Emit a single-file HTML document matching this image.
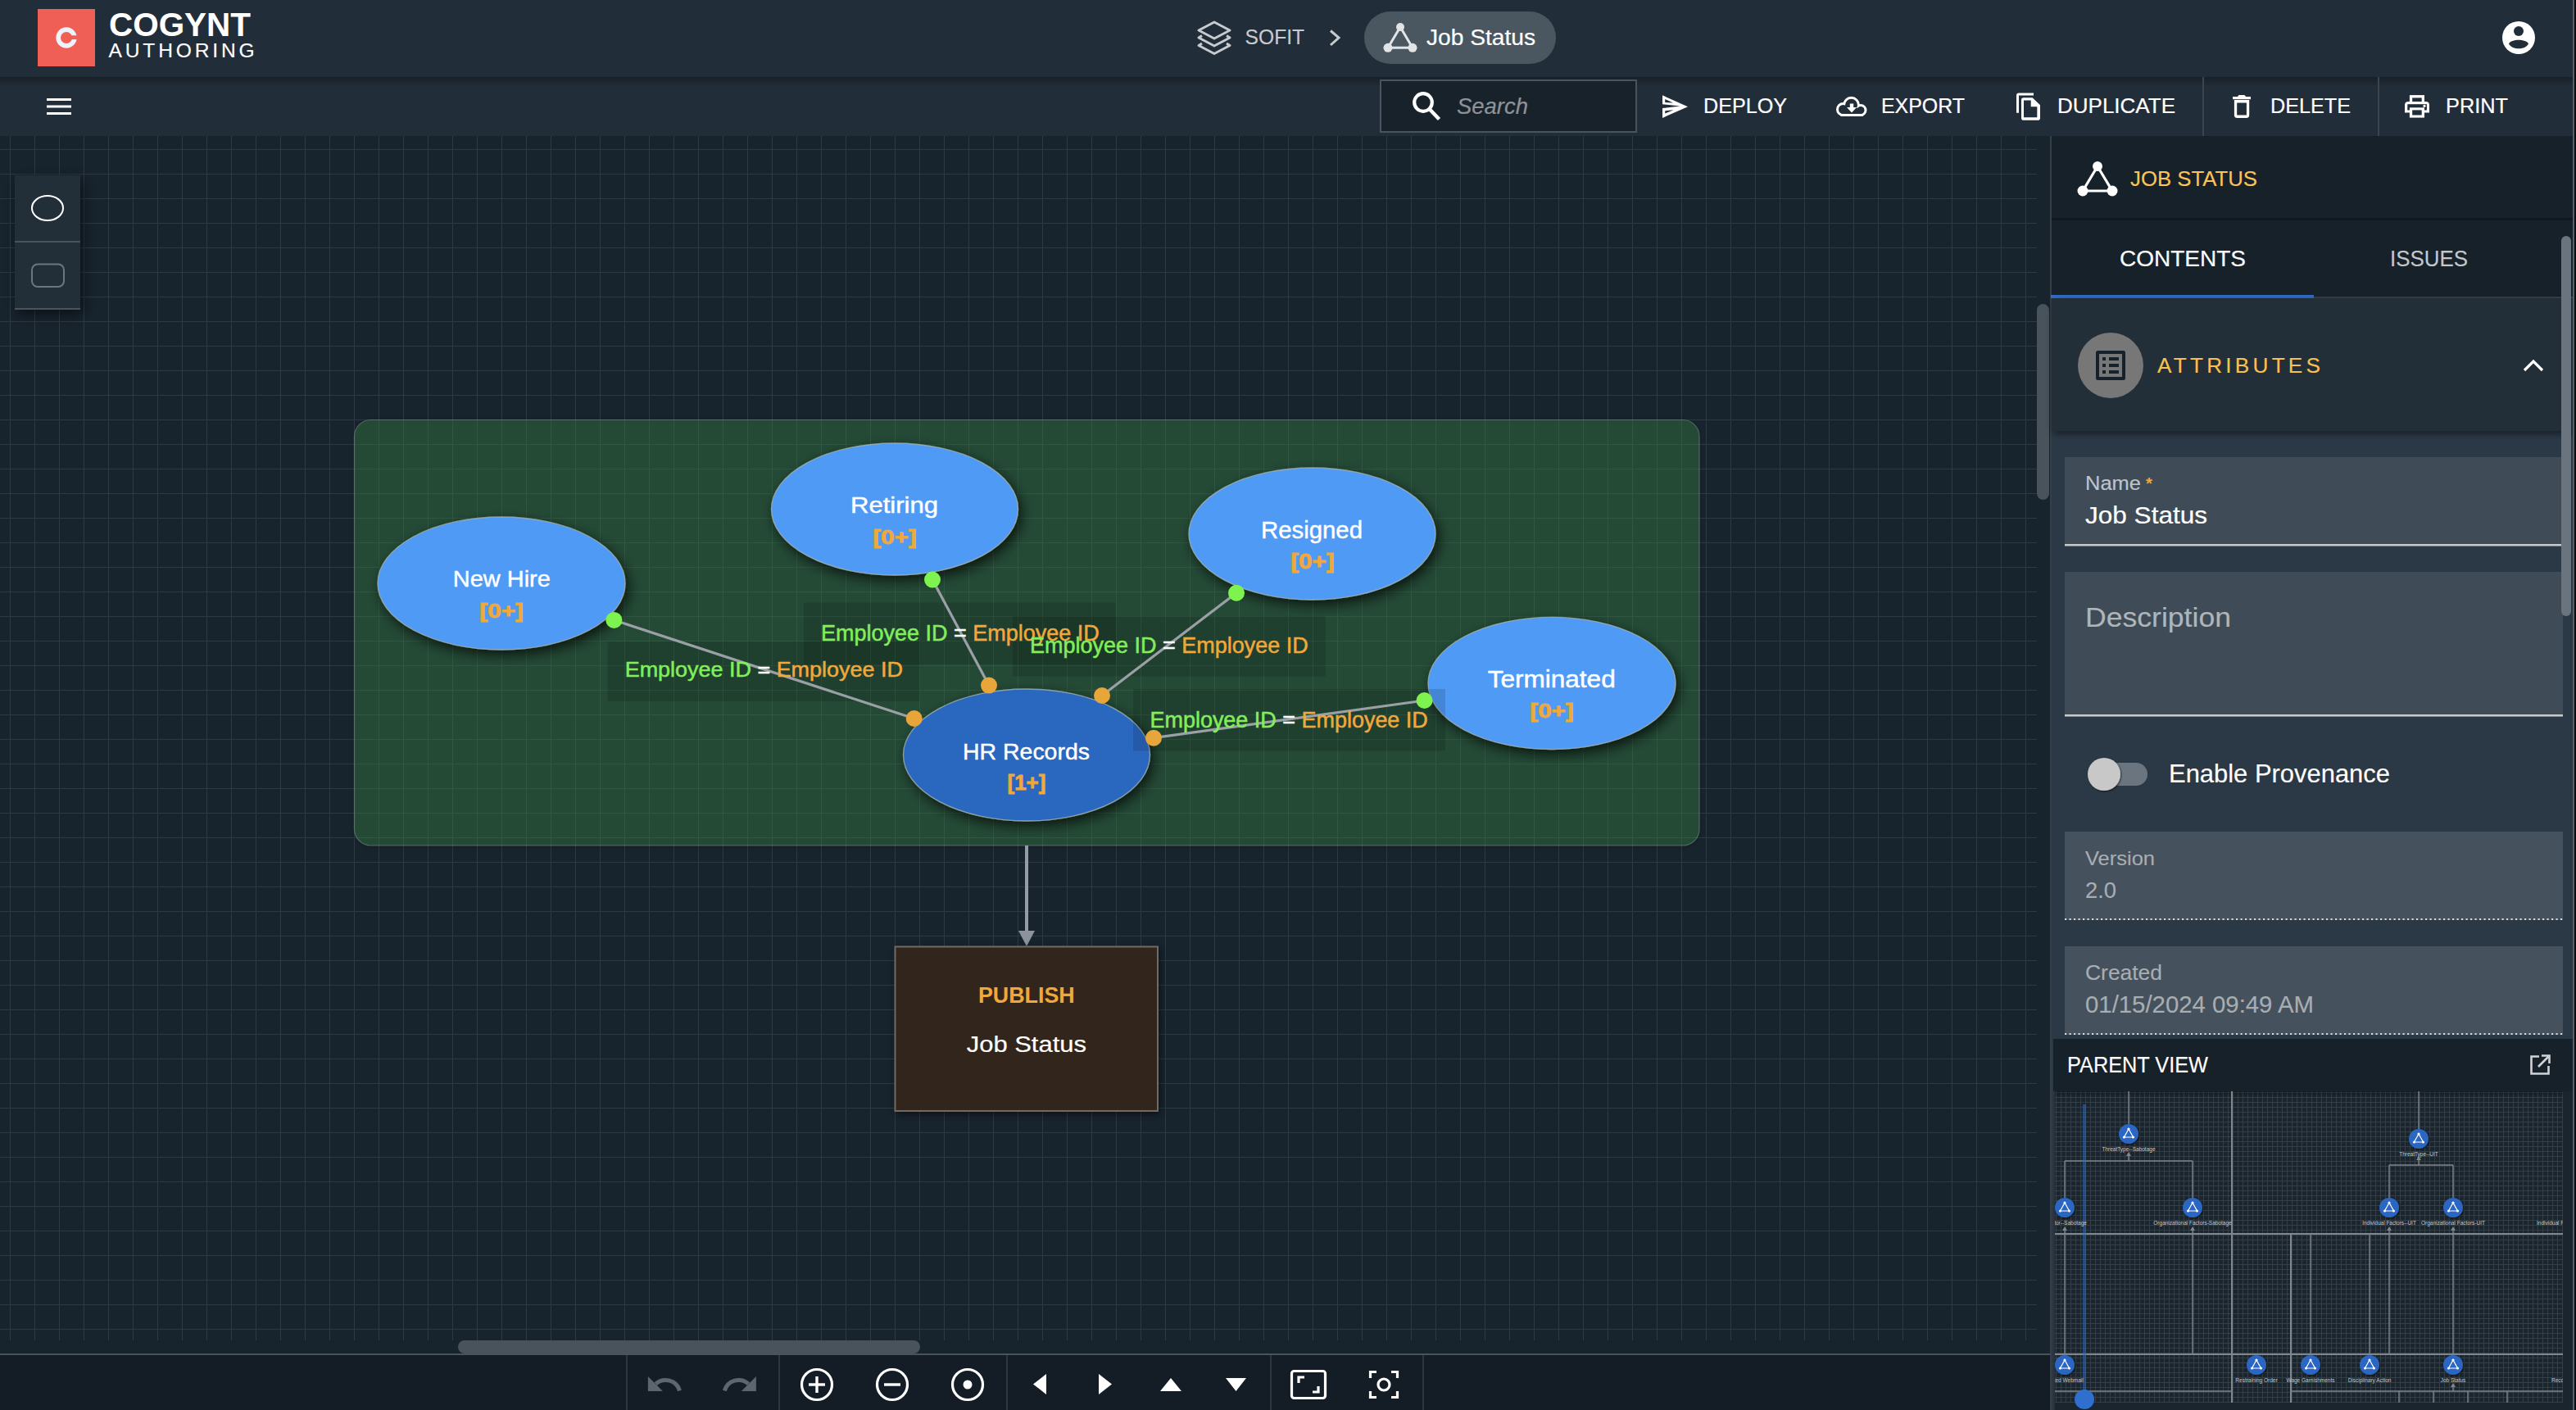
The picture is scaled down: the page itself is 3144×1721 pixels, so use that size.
<!DOCTYPE html><html><head><meta charset="utf-8"><title>Cogynt Authoring</title>
<style>html,body{margin:0;padding:0;background:#17232d;overflow:hidden}
svg{display:block;font-family:"Liberation Sans",sans-serif}</style></head><body>
<svg width="3144" height="1721" viewBox="0 0 3144 1721">
<defs>
<pattern id="grid" x="12" y="2" width="30" height="30" patternUnits="userSpaceOnUse">
<rect x="0" y="0" width="1" height="30" fill="#2d3943"/><rect x="0" y="0" width="30" height="1" fill="#2d3943"/>
</pattern>
<pattern id="mgrid" x="1" y="1" width="6" height="6" patternUnits="userSpaceOnUse">
<rect x="0" y="0" width="1" height="6" fill="#333e48"/><rect x="0" y="0" width="6" height="1" fill="#333e48"/>
</pattern>
<filter id="sh" x="-30%" y="-30%" width="160%" height="160%"><feDropShadow dx="4" dy="6" stdDeviation="8" flood-color="#000" flood-opacity="0.7"/></filter>
<filter id="sh2" x="-30%" y="-30%" width="160%" height="160%"><feDropShadow dx="2" dy="3" stdDeviation="5" flood-color="#000" flood-opacity="0.5"/></filter>
<filter id="sh3" x="-40%" y="-30%" width="180%" height="160%"><feDropShadow dx="3" dy="5" stdDeviation="8" flood-color="#000" flood-opacity="0.55"/></filter>
<filter id="shs" x="-30%" y="-30%" width="160%" height="160%"><feDropShadow dx="1" dy="1" stdDeviation="1.2" flood-color="#000" flood-opacity="0.6"/></filter>
<filter id="gsh" x="-5%" y="-5%" width="110%" height="110%"><feDropShadow dx="0" dy="1" stdDeviation="2" flood-color="#000" flood-opacity="0.5"/></filter>
<clipPath id="mclip"><rect x="2506" y="1332" width="622" height="389"/></clipPath>
<linearGradient id="hdrsh" x1="0" y1="0" x2="0" y2="1"><stop offset="0" stop-color="#000" stop-opacity="0.28"/><stop offset="1" stop-color="#000" stop-opacity="0"/></linearGradient>
</defs>

<rect x="0" y="0" width="3144" height="1721" fill="#17232d"/>
<rect x="0" y="166" width="2486" height="1470" fill="url(#grid)"/>
<rect x="432.5" y="512.5" width="1641.5" height="519.5" rx="20" fill="rgba(62,150,78,0.30)" stroke="rgba(150,175,160,0.38)" stroke-width="1.2" filter="url(#gsh)"/>
<rect x="1251" y="1032" width="4" height="106" fill="#969ca3"/>
<path d="M1243,1136 L1263,1136 L1253,1155 Z" fill="#8d939a"/>
<g filter="url(#sh2)"><rect x="1092.5" y="1155.5" width="320.5" height="200.5" fill="#33261a" stroke="#6f6b62" stroke-width="2"/></g>
<text x="1194.00" y="1224.00" font-size="27.62" font-weight="bold" font-style="normal" fill="#f0a83c" textLength="117.61" lengthAdjust="spacingAndGlyphs" >PUBLISH</text>
<text x="1179.70" y="1284.00" font-size="28.34" font-weight="normal" font-style="normal" fill="#ffffff" stroke="#ffffff" stroke-width="0.2" textLength="146.30" lengthAdjust="spacingAndGlyphs" >Job Status</text>
<ellipse cx="612" cy="712" rx="151" ry="81" fill="#4f9af5" stroke="rgba(170,180,175,0.75)" stroke-width="1.3" filter="url(#sh)"/>
<text x="552.80" y="716.10" font-size="27.91" font-weight="normal" font-style="normal" fill="#ffffff" stroke="#ffffff" stroke-width="0.45" textLength="119.00" lengthAdjust="spacingAndGlyphs" >New Hire</text>
<g transform="translate(585.30,753.99) scale(1.0580,0.8766)"><text x="0" y="0" font-size="28" font-weight="bold" fill="#f0a83c" stroke="#f0a83c" stroke-width="0.9">[0+]</text></g>
<ellipse cx="1092" cy="621.5" rx="150.5" ry="80.5" fill="#4f9af5" stroke="rgba(170,180,175,0.75)" stroke-width="1.3" filter="url(#sh)"/>
<text x="1038.00" y="626.00" font-size="27.62" font-weight="normal" font-style="normal" fill="#ffffff" stroke="#ffffff" stroke-width="0.45" textLength="106.99" lengthAdjust="spacingAndGlyphs" >Retiring</text>
<g transform="translate(1065.20,664.07) scale(1.0580,0.8804)"><text x="0" y="0" font-size="28" font-weight="bold" fill="#f0a83c" stroke="#f0a83c" stroke-width="0.9">[0+]</text></g>
<ellipse cx="1601.5" cy="651.5" rx="150.5" ry="80.5" fill="#4f9af5" stroke="rgba(170,180,175,0.75)" stroke-width="1.3" filter="url(#sh)"/>
<text x="1539.00" y="657.00" font-size="29.65" font-weight="normal" font-style="normal" fill="#ffffff" stroke="#ffffff" stroke-width="0.45" textLength="124.00" lengthAdjust="spacingAndGlyphs" >Resigned</text>
<g transform="translate(1575.20,694.03) scale(1.0560,0.8881)"><text x="0" y="0" font-size="28" font-weight="bold" fill="#f0a83c" stroke="#f0a83c" stroke-width="0.9">[0+]</text></g>
<ellipse cx="1894" cy="834" rx="151" ry="80.6" fill="#4f9af5" stroke="rgba(170,180,175,0.75)" stroke-width="1.3" filter="url(#sh)"/>
<text x="1815.70" y="838.50" font-size="28.78" font-weight="normal" font-style="normal" fill="#ffffff" stroke="#ffffff" stroke-width="0.45" textLength="155.99" lengthAdjust="spacingAndGlyphs" >Terminated</text>
<g transform="translate(1867.30,875.97) scale(1.0560,0.8804)"><text x="0" y="0" font-size="28" font-weight="bold" fill="#f0a83c" stroke="#f0a83c" stroke-width="0.9">[0+]</text></g>
<ellipse cx="1253" cy="921.5" rx="150.5" ry="80.5" fill="#2968c0" stroke="rgba(170,180,175,0.75)" stroke-width="1.3" filter="url(#sh)"/>
<text x="1175.00" y="926.50" font-size="28.34" font-weight="normal" font-style="normal" fill="#ffffff" stroke="#ffffff" stroke-width="0.45" textLength="155.00" lengthAdjust="spacingAndGlyphs" >HR Records</text>
<g transform="translate(1229.60,964.03) scale(0.9235,0.8881)"><text x="0" y="0" font-size="28" font-weight="bold" fill="#f0a83c" stroke="#f0a83c" stroke-width="0.9">[1+]</text></g>
<rect x="741.6" y="783" width="381" height="73" fill="rgba(0,0,0,0.13)"/>
<rect x="981" y="735.5" width="381" height="75.5" fill="rgba(0,0,0,0.13)"/>
<rect x="1236" y="752" width="381.7" height="73.5" fill="rgba(0,0,0,0.13)"/>
<rect x="1383" y="841" width="381" height="75.5" fill="rgba(0,0,0,0.13)"/>
<line x1="749.4" y1="756.9" x2="1115.7" y2="877" stroke="#9aa0a6" stroke-width="3.2"/>
<line x1="1138" y1="707.5" x2="1207" y2="836.6" stroke="#9aa0a6" stroke-width="3.2"/>
<line x1="1509" y1="723.7" x2="1345" y2="849" stroke="#9aa0a6" stroke-width="3.2"/>
<line x1="1738.5" y1="855" x2="1408" y2="900.7" stroke="#9aa0a6" stroke-width="3.2"/>
<g transform="translate(762.70,826.00) scale(1.0302,1)"><text x="0" y="0" font-size="26.16" font-weight="normal" xml:space="preserve" ><tspan fill="#82ee5a" stroke="#82ee5a" stroke-width="0.5">Employee ID</tspan><tspan fill="#ffffff" stroke="#ffffff" stroke-width="0.5"> = </tspan><tspan fill="#f0a83c" stroke="#f0a83c" stroke-width="0.5">Employee ID</tspan></text></g>
<g transform="translate(1002.00,782.00) scale(0.9990,1)"><text x="0" y="0" font-size="27.03" font-weight="normal" xml:space="preserve" ><tspan fill="#82ee5a" stroke="#82ee5a" stroke-width="0.5">Employee ID</tspan><tspan fill="#ffffff" stroke="#ffffff" stroke-width="0.5"> = </tspan><tspan fill="#f0a83c" stroke="#f0a83c" stroke-width="0.5">Employee ID</tspan></text></g>
<g transform="translate(1257.00,797.00) scale(0.9771,1)"><text x="0" y="0" font-size="27.62" font-weight="normal" xml:space="preserve" ><tspan fill="#82ee5a" stroke="#82ee5a" stroke-width="0.5">Employee ID</tspan><tspan fill="#ffffff" stroke="#ffffff" stroke-width="0.5"> = </tspan><tspan fill="#f0a83c" stroke="#f0a83c" stroke-width="0.5">Employee ID</tspan></text></g>
<g transform="translate(1403.50,888.00) scale(0.9975,1)"><text x="0" y="0" font-size="27.03" font-weight="normal" xml:space="preserve" ><tspan fill="#82ee5a" stroke="#82ee5a" stroke-width="0.5">Employee ID</tspan><tspan fill="#ffffff" stroke="#ffffff" stroke-width="0.5"> = </tspan><tspan fill="#f0a83c" stroke="#f0a83c" stroke-width="0.5">Employee ID</tspan></text></g>
<circle cx="749.4" cy="756.9" r="10" fill="#7ef24e"/>
<circle cx="1115.7" cy="877" r="10" fill="#e8a53a"/>
<circle cx="1138" cy="707.5" r="10" fill="#7ef24e"/>
<circle cx="1207" cy="836.6" r="10" fill="#e8a53a"/>
<circle cx="1509" cy="723.7" r="10" fill="#7ef24e"/>
<circle cx="1345" cy="849" r="10" fill="#e8a53a"/>
<circle cx="1738.5" cy="855" r="10" fill="#7ef24e"/>
<circle cx="1408" cy="900.7" r="10" fill="#e8a53a"/>
<g filter="url(#sh3)"><rect x="18" y="214" width="80" height="164" fill="#212d38"/></g>
<rect x="18" y="294" width="80" height="2" fill="#48535c"/>
<rect x="18" y="376" width="80" height="2" fill="#4a545c"/>
<ellipse cx="58" cy="254" rx="19" ry="15" fill="none" stroke="#ffffff" stroke-width="2"/>
<rect x="39" y="322.5" width="39" height="27.5" rx="7" fill="none" stroke="#6c7580" stroke-width="2"/>
<rect x="2486" y="371" width="15" height="239" rx="7.5" fill="#48535c"/>
<rect x="559" y="1636" width="564" height="16" rx="8" fill="#48535c"/>
<rect x="0" y="0" width="3144" height="94" fill="#212d39"/>
<rect x="0" y="94" width="3144" height="72" fill="#212d39"/>
<rect x="0" y="94" width="3144" height="12" fill="url(#hdrsh)"/>
<rect x="46" y="11" width="70" height="70" fill="#ef5f55"/>
<circle cx="81" cy="46" r="9.83" fill="none" stroke="#eef2f9" stroke-width="5.65"/><rect x="81" y="43.3" width="14" height="4.8" fill="#ef5f55"/>
<text x="133.00" y="43.70" font-size="41.13" font-weight="bold" font-style="normal" fill="#ffffff" textLength="172.99" lengthAdjust="spacingAndGlyphs" >COGYNT</text>
<text x="132.50" y="69.90" font-size="24.56" font-weight="normal" font-style="normal" fill="#ffffff" stroke="#ffffff" stroke-width="0.15" textLength="178.20" lengthAdjust="spacing" >AUTHORING</text>
<g fill="none" stroke="#c8cbce" stroke-width="3" stroke-linejoin="round"><path d="M1482,27 L1501,37 L1482,47 L1463,37 Z"/><path d="M1467,43.5 L1463,46 L1482,56 L1501,46 L1497,43.5"/><path d="M1467,53 L1463,55.5 L1482,65.5 L1501,55.5 L1497,53"/></g>
<text x="1519.60" y="54.20" font-size="25.58" font-weight="normal" font-style="normal" fill="#c8cbce" stroke="#c8cbce" stroke-width="0.15" textLength="72.41" lengthAdjust="spacingAndGlyphs" >SOFIT</text>
<path d="M1624,37.5 L1634,46 L1624,55" fill="none" stroke="#c8cbce" stroke-width="3"/>
<rect x="1665" y="14" width="234" height="64" rx="32" fill="#4a5761"/>
<g stroke="#e2e4e6" stroke-width="3" fill="#e2e4e6"><path d="M1709,33 L1694,58.3 L1724,58.3 Z" fill="none"/><circle cx="1709" cy="33" r="5" stroke="none"/><circle cx="1694" cy="58.3" r="5.5" stroke="none"/><circle cx="1724" cy="58.3" r="5.5" stroke="none"/></g>
<text x="1741.00" y="55.00" font-size="27.62" font-weight="normal" font-style="normal" fill="#ffffff" stroke="#ffffff" stroke-width="0.2" textLength="133.00" lengthAdjust="spacingAndGlyphs" >Job Status</text>
<circle cx="3074" cy="46" r="20" fill="#ffffff"/><circle cx="3074" cy="37.9" r="6" fill="#212d39"/><path d="M3062,53.5 C3065,47.3 3083,47.3 3086,53.5 C3082,61.3 3066,61.3 3062,53.5 Z" fill="#212d39"/>
<g fill="#ffffff"><rect x="57" y="120" width="30" height="3"/><rect x="57" y="128.5" width="30" height="3"/><rect x="57" y="137" width="30" height="3"/></g>
<rect x="1685" y="98" width="312" height="63" fill="#18222b" stroke="#4a545c" stroke-width="2"/>
<circle cx="1737" cy="125" r="10.8" fill="none" stroke="#ffffff" stroke-width="4.2"/><path d="M1745,133.5 L1756.5,145.5" stroke="#ffffff" stroke-width="4.5"/>
<text x="1778.00" y="139.00" font-size="26.89" font-weight="normal" font-style="italic" fill="#8e9399" stroke="#8e9399" stroke-width="0.2" textLength="87.01" lengthAdjust="spacingAndGlyphs" >Search</text>
<path fill-rule="evenodd" fill="#ffffff" d="M2029,116.3 L2060,130.2 L2029,143.9 Z M2029,127.2 L2050.6,129.6 L2029,132 Z M2032.2,121.1 L2042,125.5 L2032.2,125 Z M2032.2,135.2 L2042.5,134.2 L2032.2,138.6 Z"/>
<g stroke="#ffffff" stroke-width="6" fill="#ffffff"><circle cx="2249.5" cy="133.5" r="5.5"/><circle cx="2259.5" cy="128.3" r="7.5"/><circle cx="2271" cy="134.5" r="4.5"/><rect x="2249.5" y="132" width="21.5" height="7"/></g>
<g fill="#212d39"><circle cx="2249.5" cy="133.5" r="5.5"/><circle cx="2259.5" cy="128.3" r="7.5"/><circle cx="2271" cy="134.5" r="4.5"/><rect x="2249.5" y="132" width="21.5" height="7"/></g>
<g fill="#ffffff"><rect x="2257.8" y="126.5" width="4.4" height="5"/><path d="M2254,131 L2266,131 L2260,137.4 Z"/></g>
<path d="M2462.5,137.8 L2462.5,116.5 Q2462.5,115 2464,115 L2482,115" fill="none" stroke="#ffffff" stroke-width="3"/>
<path fill="#ffffff" d="M2467,122 Q2467,119.2 2469.8,119.2 L2480.6,119.2 L2490,128.3 L2490,143.9 Q2490,146.7 2487.2,146.7 L2469.8,146.7 Q2467,146.7 2467,143.9 Z"/><path fill="#212d39" d="M2470,122.6 L2478.7,122.6 L2478.7,130.2 L2486.3,130.2 L2486.3,143.3 L2470,143.3 Z"/>
<g fill="#ffffff"><rect x="2725" y="118" width="22" height="3.2"/><path d="M2730.8,118.2 L2732.5,116 L2739.5,116 L2741.3,118.2 Z"/><path d="M2726.9,122 L2745.2,122 L2745.2,140.5 Q2745.2,143.9 2741.8,143.9 L2730.3,143.9 Q2726.9,143.9 2726.9,140.5 Z"/></g><rect x="2730.2" y="125.5" width="11.7" height="15" fill="#212d39"/>
<rect x="2940.9" y="116.1" width="18.1" height="8.5" fill="#ffffff"/><rect x="2944.2" y="119.4" width="11.5" height="4.7" fill="#212d39"/><path fill="#ffffff" d="M2935,128.5 Q2935,124.1 2939.4,124.1 L2960.6,124.1 Q2965,124.1 2965,128.5 L2965,137.6 L2935,137.6 Z"/><rect x="2938.3" y="127.2" width="23.6" height="7.3" fill="#212d39"/><rect x="2940.9" y="131.3" width="18.1" height="12.3" fill="#ffffff"/><rect x="2944.2" y="134.4" width="11.5" height="6.1" fill="#212d39"/><circle cx="2959" cy="129.3" r="1.6" fill="#ffffff"/>
<text x="2079.00" y="138.30" font-size="25.15" font-weight="normal" font-style="normal" fill="#ffffff" stroke="#ffffff" stroke-width="0.2" textLength="102.00" lengthAdjust="spacingAndGlyphs" >DEPLOY</text>
<text x="2296.00" y="138.30" font-size="25.15" font-weight="normal" font-style="normal" fill="#ffffff" stroke="#ffffff" stroke-width="0.2" textLength="101.99" lengthAdjust="spacingAndGlyphs" >EXPORT</text>
<text x="2511.00" y="138.30" font-size="25.15" font-weight="normal" font-style="normal" fill="#ffffff" stroke="#ffffff" stroke-width="0.2" textLength="144.00" lengthAdjust="spacingAndGlyphs" >DUPLICATE</text>
<text x="2771.00" y="138.30" font-size="25.15" font-weight="normal" font-style="normal" fill="#ffffff" stroke="#ffffff" stroke-width="0.2" textLength="98.00" lengthAdjust="spacingAndGlyphs" >DELETE</text>
<text x="2985.00" y="138.30" font-size="25.15" font-weight="normal" font-style="normal" fill="#ffffff" stroke="#ffffff" stroke-width="0.2" textLength="76.00" lengthAdjust="spacingAndGlyphs" >PRINT</text>
<rect x="2688" y="94" width="2" height="72" fill="#3a4550"/><rect x="2902" y="94" width="2" height="72" fill="#3a4550"/>
<rect x="2502" y="166" width="638" height="1555" fill="#2b3846"/>
<rect x="2502" y="166" width="638" height="198" fill="#17212a"/>
<rect x="2504" y="266" width="636" height="3" fill="rgba(0,0,0,0.25)"/>
<rect x="2502" y="166" width="2" height="1555" fill="#363f48"/>
<g stroke="#ffffff" stroke-width="3.2" fill="none"><path d="M2560,203 L2542,233 L2578,233 Z"/></g><g fill="#ffffff"><circle cx="2560" cy="203" r="6"/><circle cx="2542" cy="233" r="6.5"/><circle cx="2578" cy="233" r="6.5"/></g>
<text x="2600.00" y="227.00" font-size="26.16" font-weight="normal" font-style="normal" fill="#fac456" stroke="#fac456" stroke-width="0.15" textLength="155.00" lengthAdjust="spacingAndGlyphs" >JOB STATUS</text>
<text x="2587.00" y="325.00" font-size="27.62" font-weight="normal" font-style="normal" fill="#ffffff" stroke="#ffffff" stroke-width="0.2" textLength="154.00" lengthAdjust="spacingAndGlyphs" >CONTENTS</text>
<text x="2917.00" y="325.00" font-size="27.62" font-weight="normal" font-style="normal" fill="#c4c8cc" stroke="#c4c8cc" stroke-width="0.15" textLength="95.00" lengthAdjust="spacingAndGlyphs" >ISSUES</text>
<rect x="2504" y="362" width="636" height="2" fill="#38434d"/>
<rect x="2503" y="360" width="321" height="4" fill="#2f6fce"/>
<g filter="url(#sh2)"><rect x="2504" y="364" width="636" height="162" fill="#212d39"/></g>
<circle cx="2576" cy="446" r="40" fill="#777777"/>
<rect x="2558" y="428" width="36" height="36" rx="2.5" fill="#16212b"/><rect x="2562" y="432" width="28" height="28" fill="#777777"/><g fill="#16212b"><rect x="2566" y="436" width="4" height="4"/><rect x="2574" y="436" width="12" height="4"/><rect x="2566" y="444" width="4" height="4"/><rect x="2574" y="444" width="12" height="4"/><rect x="2566" y="452" width="4" height="4"/><rect x="2574" y="452" width="12" height="4"/></g>
<text x="2633.00" y="455.00" font-size="26.16" font-weight="normal" font-style="normal" fill="#f7c050" stroke="#f7c050" stroke-width="0.15" textLength="199.01" lengthAdjust="spacing" >ATTRIBUTES</text>
<path d="M3081,452 L3092,441 L3103,452" fill="none" stroke="#ffffff" stroke-width="3.2"/>
<rect x="2520" y="558" width="608" height="108" fill="#3f4c58"/><rect x="2520" y="664" width="608" height="2.5" fill="#c8cacc"/>
<text x="2545.00" y="598.00" font-size="23.26" font-weight="normal" font-style="normal" fill="#c0c4c8" stroke="#c0c4c8" stroke-width="0.15" textLength="67.99" lengthAdjust="spacingAndGlyphs" >Name</text>
<text x="2619" y="597" font-size="20" fill="#f0a83c" font-weight="bold">*</text>
<text x="2545.00" y="639.00" font-size="29.07" font-weight="normal" font-style="normal" fill="#ffffff" stroke="#ffffff" stroke-width="0.2" textLength="149.00" lengthAdjust="spacingAndGlyphs" >Job Status</text>
<rect x="2520" y="698" width="608" height="177" fill="#3f4c58"/><rect x="2520" y="872" width="608" height="2.5" fill="#c8cacc"/>
<text x="2545.00" y="764.50" font-size="32.70" font-weight="normal" font-style="normal" fill="#b0b5ba" stroke="#b0b5ba" stroke-width="0.15" textLength="178.00" lengthAdjust="spacingAndGlyphs" >Description</text>
<rect x="2550" y="931" width="71" height="28" rx="14" fill="#6b7580"/>
<circle cx="2568" cy="945" r="20" fill="#c8c8c8" filter="url(#shs)"/>
<text x="2647.00" y="955.00" font-size="30.52" font-weight="normal" font-style="normal" fill="#ffffff" stroke="#ffffff" stroke-width="0.15" textLength="269.99" lengthAdjust="spacingAndGlyphs" >Enable Provenance</text>
<rect x="2520" y="1015" width="608" height="108" fill="#45515d"/>
<line x1="2520" y1="1122" x2="3128" y2="1122" stroke="#d8dadc" stroke-width="2.2" stroke-dasharray="2.2,3.3"/>
<text x="2545.00" y="1056.00" font-size="24.71" font-weight="normal" font-style="normal" fill="#a8adb2" stroke="#a8adb2" stroke-width="0.15" textLength="85.01" lengthAdjust="spacingAndGlyphs" >Version</text>
<text x="2545.00" y="1096.00" font-size="28.34" font-weight="normal" font-style="normal" fill="#a8adb2" stroke="#a8adb2" stroke-width="0.15" textLength="38.00" lengthAdjust="spacingAndGlyphs" >2.0</text>
<rect x="2520" y="1155" width="608" height="108" fill="#45515d"/>
<line x1="2520" y1="1262" x2="3128" y2="1262" stroke="#d8dadc" stroke-width="2.2" stroke-dasharray="2.2,3.3"/>
<text x="2545.00" y="1195.60" font-size="25.58" font-weight="normal" font-style="normal" fill="#a8adb2" stroke="#a8adb2" stroke-width="0.15" textLength="93.99" lengthAdjust="spacingAndGlyphs" >Created</text>
<text x="2545.00" y="1236.00" font-size="29.07" font-weight="normal" font-style="normal" fill="#a8adb2" stroke="#a8adb2" stroke-width="0.15" textLength="279.00" lengthAdjust="spacingAndGlyphs" >01/15/2024 09:49 AM</text>
<rect x="3126" y="288" width="12" height="464" rx="6" fill="#6a747e"/>
<rect x="2506" y="1268" width="634" height="64" fill="#17212a"/>
<text x="2523.00" y="1309.00" font-size="27.62" font-weight="normal" font-style="normal" fill="#ffffff" stroke="#ffffff" stroke-width="0.15" textLength="172.01" lengthAdjust="spacingAndGlyphs" >PARENT VIEW</text>
<g fill="none" stroke="#d0d3d6" stroke-width="2.6"><path d="M3099,1289.5 L3089.5,1289.5 L3089.5,1310.5 L3110.5,1310.5 L3110.5,1301"/><path d="M3098,1302 L3111,1289"/><path d="M3102,1288.5 L3111.5,1288.5 L3111.5,1298"/></g>
<rect x="3140" y="0" width="2" height="1721" fill="#56606a"/><rect x="3142" y="0" width="2" height="1721" fill="#0a0d10"/>
<rect x="2506" y="1332" width="634" height="389" fill="#1b252e"/>
<g clip-path="url(#mclip)">
<rect x="2506" y="1332" width="622" height="380" fill="url(#mgrid)"/>
<rect x="2506" y="1332" width="634" height="6" fill="url(#hdrsh)"/>
<line x1="2598" y1="1332" x2="2598" y2="1372" stroke="#80868c" stroke-width="1.4"/>
<line x1="2952" y1="1332" x2="2952" y2="1378" stroke="#80868c" stroke-width="1.4"/>
<line x1="2520" y1="1417" x2="2676" y2="1417" stroke="#80868c" stroke-width="1.4"/>
<line x1="2520" y1="1417" x2="2520" y2="1462" stroke="#80868c" stroke-width="1.4"/>
<line x1="2676" y1="1417" x2="2676" y2="1462" stroke="#80868c" stroke-width="1.4"/>
<line x1="2598" y1="1408" x2="2598" y2="1417" stroke="#80868c" stroke-width="1.4"/>
<path d="M2595,1411 L2601,1411 L2598,1406 Z" fill="#80868c"/>
<line x1="2916" y1="1422" x2="2994" y2="1422" stroke="#80868c" stroke-width="1.4"/>
<line x1="2916" y1="1422" x2="2916" y2="1462" stroke="#80868c" stroke-width="1.4"/>
<line x1="2994" y1="1422" x2="2994" y2="1462" stroke="#80868c" stroke-width="1.4"/>
<line x1="2952" y1="1413" x2="2952" y2="1422" stroke="#80868c" stroke-width="1.4"/>
<path d="M2949,1416 L2955,1416 L2952,1411 Z" fill="#80868c"/>
<line x1="2724" y1="1332" x2="2724" y2="1712" stroke="#80868c" stroke-width="2"/>
<line x1="2506" y1="1506" x2="3128" y2="1506" stroke="#80868c" stroke-width="2"/>
<line x1="2506" y1="1653" x2="3128" y2="1653" stroke="#80868c" stroke-width="2"/>
<line x1="2520" y1="1500" x2="2520" y2="1653" stroke="#80868c" stroke-width="1.4"/>
<path d="M2517,1502 L2523,1502 L2520,1497 Z" fill="#80868c"/>
<line x1="2676" y1="1500" x2="2676" y2="1653" stroke="#80868c" stroke-width="1.4"/>
<path d="M2673,1502 L2679,1502 L2676,1497 Z" fill="#80868c"/>
<line x1="2916" y1="1500" x2="2916" y2="1653" stroke="#80868c" stroke-width="1.4"/>
<path d="M2913,1502 L2919,1502 L2916,1497 Z" fill="#80868c"/>
<line x1="2994" y1="1500" x2="2994" y2="1653" stroke="#80868c" stroke-width="1.4"/>
<path d="M2991,1502 L2997,1502 L2994,1497 Z" fill="#80868c"/>
<line x1="2796" y1="1506" x2="2796" y2="1712" stroke="#80868c" stroke-width="2"/>
<line x1="2820" y1="1506" x2="2820" y2="1654" stroke="#80868c" stroke-width="1.4"/>
<line x1="2892" y1="1506" x2="2892" y2="1654" stroke="#80868c" stroke-width="1.4"/>
<line x1="2506" y1="1698" x2="2724" y2="1698" stroke="#80868c" stroke-width="1.4"/>
<line x1="2796" y1="1698" x2="3128" y2="1698" stroke="#80868c" stroke-width="1.4"/>
<line x1="2928" y1="1698" x2="2928" y2="1712" stroke="#80868c" stroke-width="1.4"/>
<line x1="2970" y1="1698" x2="2970" y2="1712" stroke="#80868c" stroke-width="1.4"/>
<line x1="3012" y1="1698" x2="3012" y2="1712" stroke="#80868c" stroke-width="1.4"/>
<line x1="3060" y1="1698" x2="3060" y2="1712" stroke="#80868c" stroke-width="1.4"/>
<line x1="2994" y1="1690" x2="2994" y2="1698" stroke="#80868c" stroke-width="1.4"/>
<path d="M2991,1693 L2997,1693 L2994,1688 Z" fill="#80868c"/>
<rect x="2542" y="1348" width="4" height="360" fill="rgba(45,105,200,0.55)"/>
<circle cx="2598" cy="1384" r="12" fill="#2966c2" filter="url(#shs)"/>
<g stroke="#ffffff" stroke-width="1.2" fill="none"><path d="M2598,1378 L2592.5,1388 L2603.5,1388 Z"/></g><g fill="#ffffff"><circle cx="2598" cy="1378" r="1.6"/><circle cx="2592.5" cy="1388" r="1.6"/><circle cx="2603.5" cy="1388" r="1.6"/></g>
<text x="2598" y="1405" font-size="6.5" fill="#c4c8cc" text-anchor="middle">ThreatType--Sabotage</text>
<circle cx="2952" cy="1390" r="12" fill="#2966c2" filter="url(#shs)"/>
<g stroke="#ffffff" stroke-width="1.2" fill="none"><path d="M2952,1384 L2946.5,1394 L2957.5,1394 Z"/></g><g fill="#ffffff"><circle cx="2952" cy="1384" r="1.6"/><circle cx="2946.5" cy="1394" r="1.6"/><circle cx="2957.5" cy="1394" r="1.6"/></g>
<text x="2952" y="1411" font-size="6.5" fill="#c4c8cc" text-anchor="middle">ThreatType--UIT</text>
<circle cx="2520" cy="1474" r="12" fill="#2966c2" filter="url(#shs)"/>
<g stroke="#ffffff" stroke-width="1.2" fill="none"><path d="M2520,1468 L2514.5,1478 L2525.5,1478 Z"/></g><g fill="#ffffff"><circle cx="2520" cy="1468" r="1.6"/><circle cx="2514.5" cy="1478" r="1.6"/><circle cx="2525.5" cy="1478" r="1.6"/></g>
<text x="2520" y="1495" font-size="6.5" fill="#c4c8cc" text-anchor="middle">l Factor--Sabotage</text>
<circle cx="2676" cy="1474" r="12" fill="#2966c2" filter="url(#shs)"/>
<g stroke="#ffffff" stroke-width="1.2" fill="none"><path d="M2676,1468 L2670.5,1478 L2681.5,1478 Z"/></g><g fill="#ffffff"><circle cx="2676" cy="1468" r="1.6"/><circle cx="2670.5" cy="1478" r="1.6"/><circle cx="2681.5" cy="1478" r="1.6"/></g>
<text x="2676" y="1495" font-size="6.5" fill="#c4c8cc" text-anchor="middle">Organizational Factors-Sabotage</text>
<circle cx="2916" cy="1474" r="12" fill="#2966c2" filter="url(#shs)"/>
<g stroke="#ffffff" stroke-width="1.2" fill="none"><path d="M2916,1468 L2910.5,1478 L2921.5,1478 Z"/></g><g fill="#ffffff"><circle cx="2916" cy="1468" r="1.6"/><circle cx="2910.5" cy="1478" r="1.6"/><circle cx="2921.5" cy="1478" r="1.6"/></g>
<text x="2916" y="1495" font-size="6.5" fill="#c4c8cc" text-anchor="middle">Individual Factors--UIT</text>
<circle cx="2994" cy="1474" r="12" fill="#2966c2" filter="url(#shs)"/>
<g stroke="#ffffff" stroke-width="1.2" fill="none"><path d="M2994,1468 L2988.5,1478 L2999.5,1478 Z"/></g><g fill="#ffffff"><circle cx="2994" cy="1468" r="1.6"/><circle cx="2988.5" cy="1478" r="1.6"/><circle cx="2999.5" cy="1478" r="1.6"/></g>
<text x="2994" y="1495" font-size="6.5" fill="#c4c8cc" text-anchor="middle">Organizational Factors-UIT</text>
<circle cx="2520" cy="1666" r="12" fill="#2966c2" filter="url(#shs)"/>
<g stroke="#ffffff" stroke-width="1.2" fill="none"><path d="M2520,1660 L2514.5,1670 L2525.5,1670 Z"/></g><g fill="#ffffff"><circle cx="2520" cy="1660" r="1.6"/><circle cx="2514.5" cy="1670" r="1.6"/><circle cx="2525.5" cy="1670" r="1.6"/></g>
<text x="2520" y="1687" font-size="6.5" fill="#c4c8cc" text-anchor="middle">clisted Webmail</text>
<circle cx="2754" cy="1666" r="12" fill="#2966c2" filter="url(#shs)"/>
<g stroke="#ffffff" stroke-width="1.2" fill="none"><path d="M2754,1660 L2748.5,1670 L2759.5,1670 Z"/></g><g fill="#ffffff"><circle cx="2754" cy="1660" r="1.6"/><circle cx="2748.5" cy="1670" r="1.6"/><circle cx="2759.5" cy="1670" r="1.6"/></g>
<text x="2754" y="1687" font-size="6.5" fill="#c4c8cc" text-anchor="middle">Restraining Order</text>
<circle cx="2820" cy="1666" r="12" fill="#2966c2" filter="url(#shs)"/>
<g stroke="#ffffff" stroke-width="1.2" fill="none"><path d="M2820,1660 L2814.5,1670 L2825.5,1670 Z"/></g><g fill="#ffffff"><circle cx="2820" cy="1660" r="1.6"/><circle cx="2814.5" cy="1670" r="1.6"/><circle cx="2825.5" cy="1670" r="1.6"/></g>
<text x="2820" y="1687" font-size="6.5" fill="#c4c8cc" text-anchor="middle">Wage Garnishments</text>
<circle cx="2892" cy="1666" r="12" fill="#2966c2" filter="url(#shs)"/>
<g stroke="#ffffff" stroke-width="1.2" fill="none"><path d="M2892,1660 L2886.5,1670 L2897.5,1670 Z"/></g><g fill="#ffffff"><circle cx="2892" cy="1660" r="1.6"/><circle cx="2886.5" cy="1670" r="1.6"/><circle cx="2897.5" cy="1670" r="1.6"/></g>
<text x="2892" y="1687" font-size="6.5" fill="#c4c8cc" text-anchor="middle">Disciplinary Action</text>
<circle cx="2994" cy="1666" r="12" fill="#2966c2" filter="url(#shs)"/>
<g stroke="#ffffff" stroke-width="1.2" fill="none"><path d="M2994,1660 L2988.5,1670 L2999.5,1670 Z"/></g><g fill="#ffffff"><circle cx="2994" cy="1660" r="1.6"/><circle cx="2988.5" cy="1670" r="1.6"/><circle cx="2999.5" cy="1670" r="1.6"/></g>
<text x="2994" y="1687" font-size="6.5" fill="#c4c8cc" text-anchor="middle">Job Status</text>
<text x="3096" y="1495" font-size="6.5" fill="#c4c8cc">Individual Fa</text>
<text x="3114" y="1687" font-size="6.5" fill="#c4c8cc">Reco</text>
<circle cx="2544" cy="1708" r="12" fill="#2f6fd0"/>
</g>
<rect x="2506" y="1332" width="2" height="389" fill="#2a333b"/>
<rect x="0" y="1652" width="2502" height="69" fill="#141c25"/>
<rect x="0" y="1652" width="2502" height="2" fill="#4a525a"/>
<rect x="764" y="1654" width="2" height="67" fill="#2e3740"/>
<rect x="950" y="1654" width="2" height="67" fill="#2e3740"/>
<rect x="1228" y="1654" width="2" height="67" fill="#2e3740"/>
<rect x="1550" y="1654" width="2" height="67" fill="#2e3740"/>
<rect x="1736" y="1654" width="2" height="67" fill="#2e3740"/>
<g fill="#5d656e"><path d="M790.9,1680 L790.9,1698 L808.9,1698 Z"/><path d="M922.9,1680 L922.9,1698 L904.9,1698 Z"/></g>
<g fill="none" stroke="#5d656e" stroke-width="5"><path d="M800.3,1689.1 A17.9,17.9 0 0 1 829.5,1697.5"/><path d="M913.5,1689.1 A17.9,17.9 0 0 0 884.3,1697.5"/></g>
<g fill="none" stroke="#ffffff" stroke-width="3.2"><circle cx="997" cy="1690" r="18.5"/><circle cx="1089" cy="1690" r="18.5"/><circle cx="1181" cy="1690" r="18.5"/></g>
<g fill="#ffffff"><rect x="987" y="1688.3" width="20" height="3.4"/><rect x="995.3" y="1680" width="3.4" height="20"/><rect x="1079" y="1688.3" width="20" height="3.4"/><circle cx="1181" cy="1690" r="5.5"/><path d="M1277,1677 L1277,1702 L1261,1689.5 Z"/><path d="M1341,1677 L1341,1702 L1357,1689.5 Z"/><path d="M1416,1698 L1442,1698 L1429,1682 Z"/><path d="M1496,1682 L1521,1682 L1508.5,1698 Z"/></g>
<g fill="none" stroke="#ffffff" stroke-width="3.2"><rect x="1576.5" y="1673.5" width="41" height="33" rx="3"/><path d="M1585,1688 L1585,1681 L1592,1681"/><path d="M1609,1692 L1609,1699 L1602,1699"/><path d="M1672.5,1682 L1672.5,1674.5 L1680,1674.5"/><path d="M1698,1674.5 L1705.5,1674.5 L1705.5,1682"/><path d="M1672.5,1698 L1672.5,1705.5 L1680,1705.5"/><path d="M1698,1705.5 L1705.5,1705.5 L1705.5,1698"/><circle cx="1689" cy="1690" r="7"/></g>
</svg></body></html>
